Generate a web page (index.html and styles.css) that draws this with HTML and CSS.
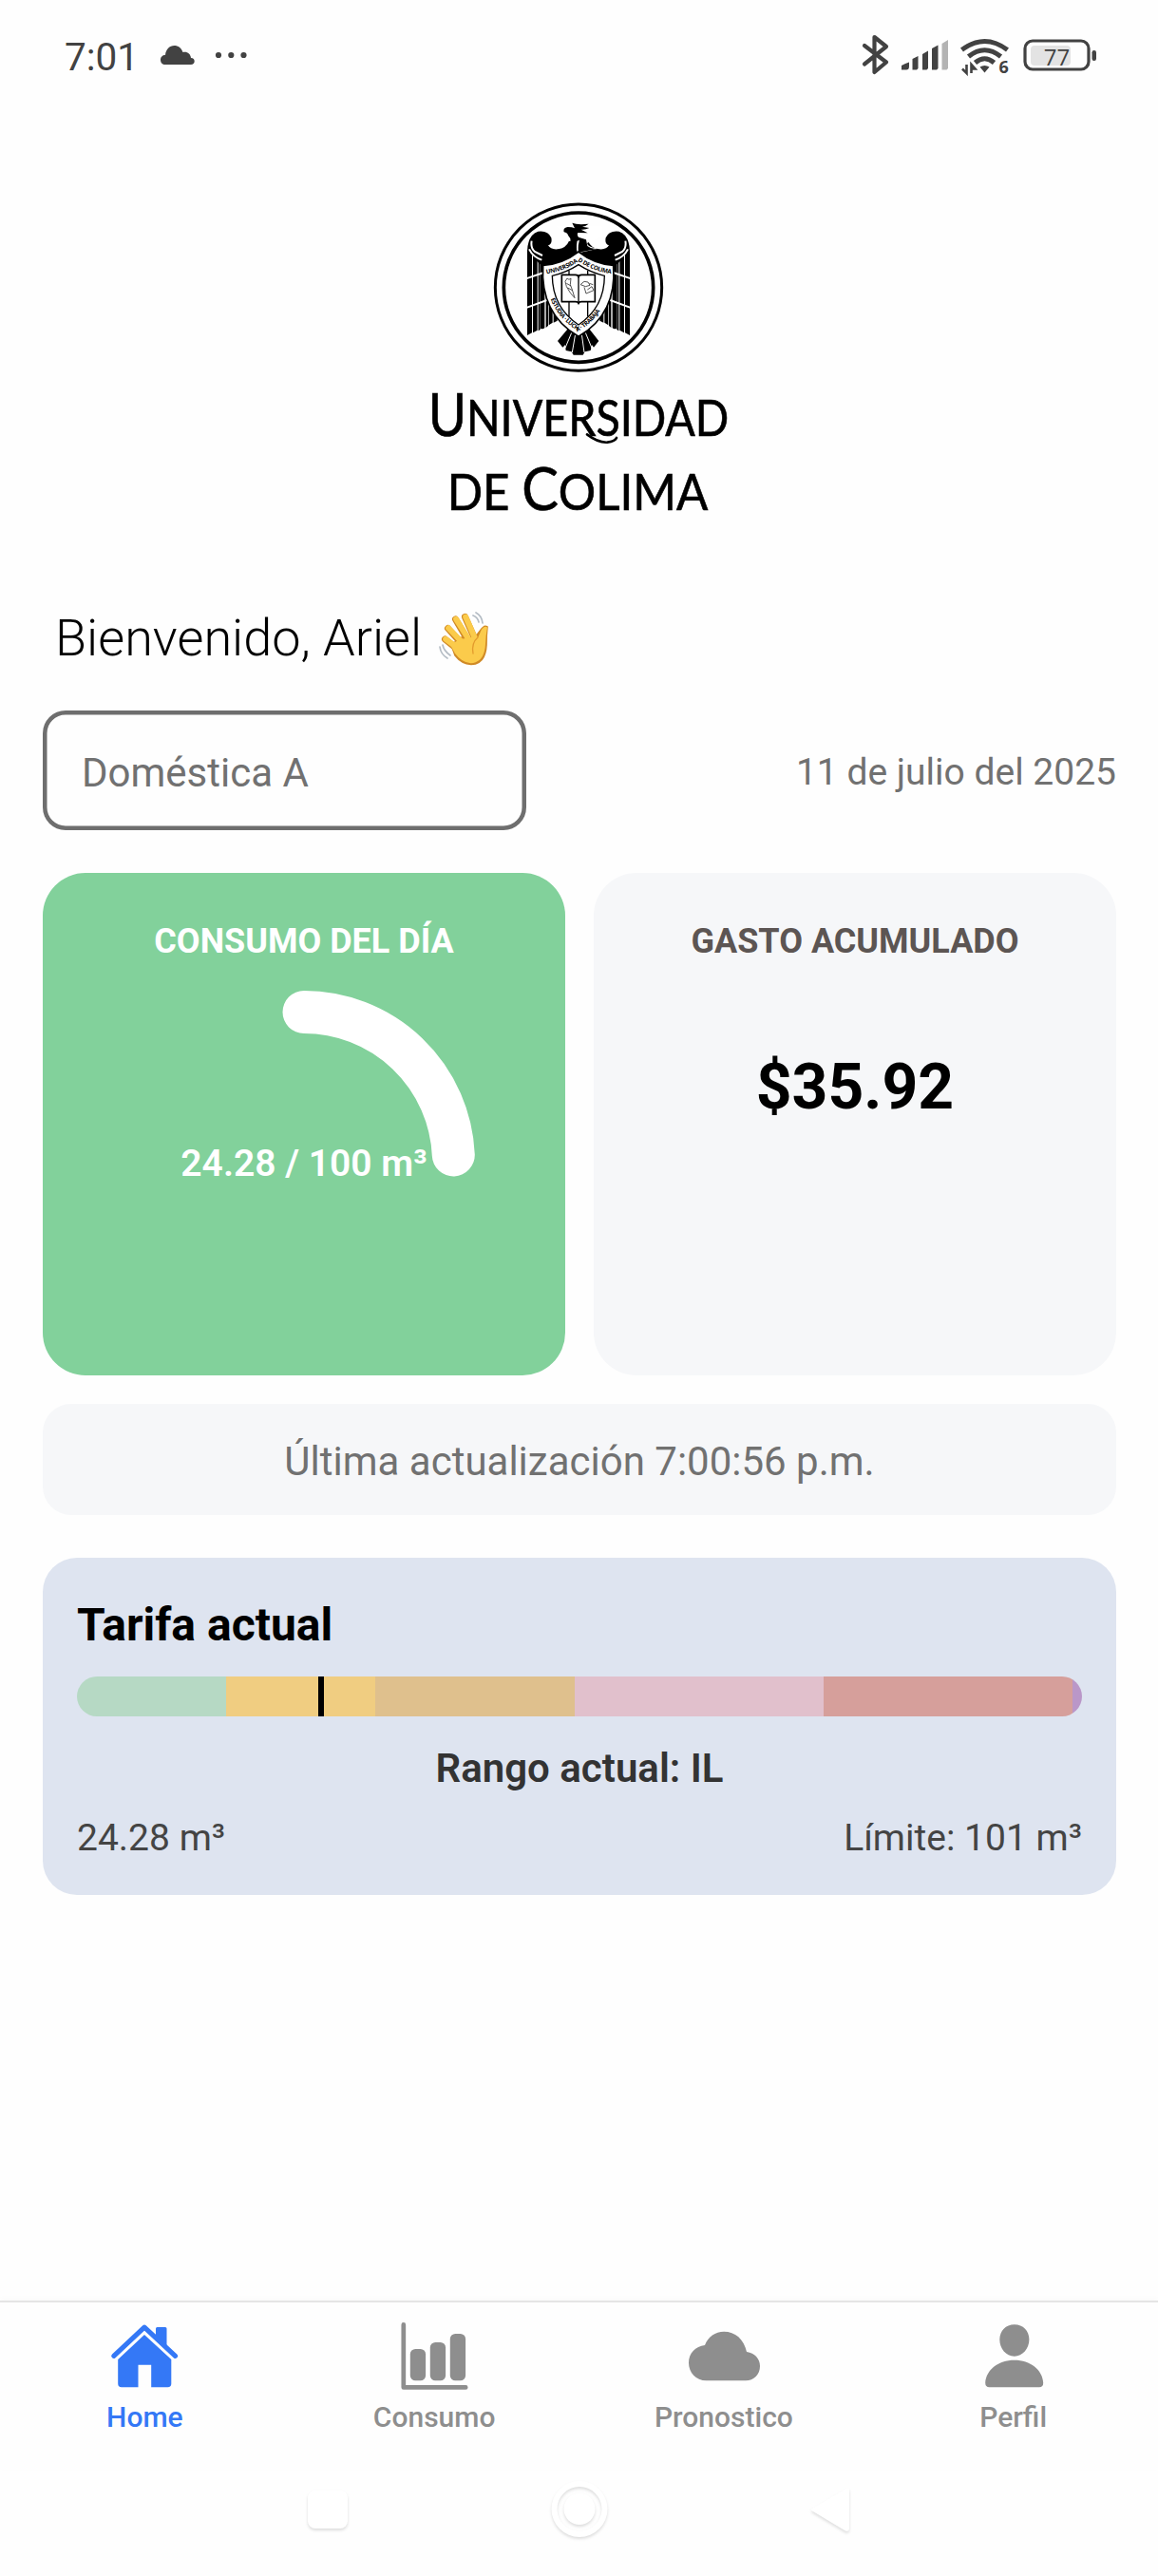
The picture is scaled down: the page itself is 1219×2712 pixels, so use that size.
FILE: index.html
```html
<!DOCTYPE html>
<html lang="es">
<head>
<meta charset="utf-8">
<title>Consumo de agua</title>
<link rel="stylesheet" href="styles.css">
</head>
<body>
<div class="screen">
  <header class="status">
    <div class="status-left">
      <span class="clock">7:01</span>
      <svg class="status-cloud" width="36" height="20" viewBox="0 0 36 20"><path fill="#424242" d="M5 20C2 20 0 18 0 15C0 12 2 10 5 10C5.500 4 9.500 0 14.500 0C18.500 0 22 2.500 23.500 7C28 6 31.500 8.500 32 13C34.500 13 35.700 14.500 35.700 16.500C35.700 18.500 34.200 20 32 20Z"/></svg>
      <svg width="34" height="8" viewBox="0 0 34 8" fill="#424242"><circle cx="4" cy="4" r="3.100"/><circle cx="17.300" cy="4" r="3.100"/><circle cx="30.500" cy="4" r="3.100"/></svg>
    </div>
    <svg class="status-right" width="250" height="48" viewBox="0 0 250 48">
      <path fill="none" stroke="#424242" stroke-width="4.200" stroke-linejoin="round" stroke-linecap="round" d="M5 14L28 31.500L15.500 42V5L28 15L5 33.500"/>
      <g fill="#424242">
        <path d="M44 39.500V35Q48 32.500 52 31.500V36Q52 39.500 49 39.500ZM55.500 39.500V28L61.500 25V38L60 39.500ZM66 39.500V23L72 19.500V38L70.500 39.500ZM76 39.500V17L82.500 13.500V38L81 39.500Z"/>
        <path fill="#b3b3b3" d="M86.500 39.500V12L93 8V38L91.500 39.500Z"/>
      </g>
      <g fill="none" stroke="#424242" stroke-width="5">
        <path d="M107.500 18.500Q131.500 .5 155.500 18.500"/><path d="M114.500 25.500Q131.500 12 148.500 25.500"/><path d="M121.500 32Q131.500 23.500 141.500 32"/>
      </g>
      <path fill="#424242" d="M126.500 36.500Q131.500 33.500 136.500 36.500L131.500 42.500Z"/>
      <path fill="none" stroke="#424242" stroke-width="2.600" d="M112.500 34V43L108 38.500M117.500 43V34L121.500 38.500H117"/>
      <text class="wifi-gen" x="146.500" y="43">6</text>
      <rect x="180" y="14" width="42" height="21" rx="4" fill="#e3e3e3"/>
      <rect x="174" y="9" width="67" height="30" rx="8" fill="none" stroke="#424242" stroke-width="3.200"/>
      <rect x="244.500" y="19" width="4.500" height="11" rx="2.200" fill="#424242"/>
      <text class="battery-level" x="207.500" y="35" text-anchor="middle">77</text>
    </svg>
  </header>

  <main class="content">
    <svg class="logo" width="320" height="330" viewBox="0 0 960 990" role="img" aria-label="Universidad de Colima">
      <defs>
        <g id="wing">
          <path d="M166 195Q168 142 200 132Q232 128 242 152Q246 172 232 176Q240 190 262 188Q296 184 301 150L280 130Q283 118 298 122L328 160V212Q285 240 215 242Q185 220 178 196Z"/>
          <path d="M166 190V460L181 452V195ZM184 200V452L198 444V205ZM201 210V446L207 442V210ZM208 215V438Q216 442 221 436V225ZM225 235V436L232 430V240ZM234 240V428L246 420V240ZM249 240V420L261 414V240Z"/>
          <path fill="none" stroke="#fff" stroke-width="6" d="M160 282L218 262M160 374L236 346M180 162Q176 184 190 196L214 208M172 188Q184 212 212 222"/>
        </g>
        <path id="motto-top" d="M227 266Q285 256 328 227Q372 256 432 266"/>
        <path id="motto-bottom" d="M240 345Q265 410 328 447Q391 410 418 340"/>
      </defs>
      <g transform="translate(149 -40)">
        <g fill="none" stroke="#000">
          <circle cx="328" cy="309" r="263" stroke-width="9"/>
          <circle cx="328" cy="309" r="236" stroke-width="11"/>
        </g>
        <path d="M294 440L262 478L278 498L286 490L288 508L306 512L312 522H342L348 512L366 508L370 490L376 498L392 478L362 440Z"/>
        <path fill="none" stroke="#fff" stroke-width="3" d="M306 452L286 500M318 456L308 514M338 456L346 514M350 452L370 500"/>
        <use href="#wing"/>
        <use href="#wing" transform="translate(656 0) scale(-1 1)"/>
        <path fill="#fff" d="M258 116H402V148L356 168Q352 180 390 186L328 200Q318 196 324 160L292 164Z"/>
        <path d="M300 180Q307 155 296 146Q293 136 282 134Q278 120 294 118Q308 118 316 122L308 105Q324 112 360 108Q350 116 340 117L362 121Q350 127 336 126L357 137L326 136Q322 143 328 150L352 158L356 178Q370 190 390 186L328 198Q325 178 331 160L322 162L320 190Z"/>
        <path fill="#fff" stroke="#000" stroke-width="5" d="M328 196Q278 235 216 239Q206 392 328 464Q450 392 438 239Q378 235 328 196Z"/>
        <path fill="#fff" stroke="#000" stroke-width="4" d="M328 237Q290 262 245 272Q246 372 328 427Q410 372 410 272Q366 262 328 237Z"/>
        <path fill="none" stroke="#000" stroke-width="4" d="M298 256V400M357 256V400"/>
        <path fill="#fff" stroke="#000" stroke-width="5" stroke-linejoin="round" d="M275 269H318Q328 269 328 276Q328 269 338 269H380V354H338Q328 354 328 360Q328 354 318 354H275Z"/>
        <path fill="none" stroke="#000" stroke-width="4" d="M328 274V358"/>
        <path fill="none" stroke="#333" stroke-width="2.500" d="M292 280L298 284L304 280L302 300L308 316L316 342L302 326L290 306L286 290ZM290 296L304 304M294 310L308 318M334 300L346 290L358 292L364 302L350 306L340 302ZM346 308L352 328L376 318L370 306L356 316M362 296L374 300"/>
        <text class="motto"><textPath href="#motto-top" textLength="220">UNIVERSIDAD DE COLIMA</textPath></text>
        <text class="motto"><textPath href="#motto-bottom" textLength="232">ESTUDIA · LUCHA · TRABAJA</textPath></text>
      </g>
      <g class="logo-name">
        <text x="2" y="739" textLength="950" lengthAdjust="spacingAndGlyphs"><tspan class="initial">U</tspan>NIVERSIDAD</text>
        <text x="62" y="972" textLength="824" lengthAdjust="spacingAndGlyphs">DE <tspan class="initial">C</tspan>OLIMA</text>
      </g>
      <path fill="none" stroke="#000" stroke-width="8" stroke-linecap="round" d="M504 733Q540 760 568 758Q592 755 597 744"/>
    </svg>

    <h1 class="greeting">Bienvenido, Ariel
      <svg class="wave" width="53" height="58" viewBox="0 0 53 58">
        <g fill="none" stroke="#b4bcc4" stroke-width="1.700" stroke-linecap="round"><path d="M39 2Q45 5 46 13M36 5Q41 7 42 12M1 38Q2 46 9 50M4 36Q5 42 12 47"/></g>
        <g stroke-linecap="round" stroke-linejoin="round">
          <path fill="#d08a26" stroke="#d08a26" stroke-width="1.600" d="M13 36L24 28L38 28L45 19Q48 15 51 17Q50 25 50 36Q49 56 34 56.500Q24 56 17 47Z"/>
          <path fill="none" stroke="#d08a26" stroke-width="7" d="M6.500 30L24 44M9.500 18.500L27 38M17.500 9L31 32M27.500 6.500L38 30"/>
          <path fill="none" stroke="#fbcb4b" stroke-width="6" d="M7.200 29.800L25 43M10.200 18.300L28 37M18.200 8.900L32 31M28.200 6.500L38 29"/>
          <path fill="#fbcb4b" d="M12 36L22 30L38 27.500L41 28.500L45 19.500Q48 15.500 51 17.500Q49.500 25 49 35Q48 54.500 33.500 55.300Q24 54.500 17 45Z"/>
          <path fill="none" stroke="#e39b2d" stroke-width="1.300" d="M41 28Q34 34 36 45"/>
        </g>
      </svg>
    </h1>

    <div class="selector-row">
      <div class="tariff-select">Doméstica A</div>
      <time class="date">11 de julio del 2025</time>
    </div>

    <div class="cards">
      <section class="card card-usage">
        <h2>CONSUMO DEL DÍA</h2>
        <div class="gauge">
          <svg width="360" height="360" viewBox="0 0 360 360"><path d="M180 22.500A157.500 157.500 0 0 1 337.300 172.900" fill="none" stroke="#fff" stroke-width="45" stroke-linecap="round"/></svg>
          <span>24.28 / 100 m³</span>
        </div>
      </section>
      <section class="card card-cost">
        <h2>GASTO ACUMULADO</h2>
        <p class="amount">$35.92</p>
      </section>
    </div>

    <p class="updated">Última actualización 7:00:56 p.m.</p>

    <section class="tariff">
      <h2>Tarifa actual</h2>
      <div class="bar">
        <span class="seg seg-1" style="flex-grow:15"></span>
        <span class="seg seg-2" style="flex-grow:15"></span>
        <span class="seg seg-3" style="flex-grow:20"></span>
        <span class="seg seg-4" style="flex-grow:25"></span>
        <span class="seg seg-5" style="flex-grow:25"></span>
        <span class="seg seg-6" style="flex-grow:1"></span>
        <span class="marker" style="left:24.04%"></span>
      </div>
      <p class="range">Rango actual: IL</p>
      <div class="limits"><span>24.28 m³</span><span>Límite: 101 m³</span></div>
    </section>
  </main>

  <nav class="tabs">
    <a class="tab tab-active">
      <svg width="76" height="76" viewBox="0 0 76 76"><path fill="none" stroke="currentColor" stroke-width="5.200" stroke-linecap="round" stroke-linejoin="round" d="M5.800 37.300L38 7.200L70.500 37.300"/><path fill="currentColor" d="M50 16V8.500Q50 7 51.500 7H60Q61.500 7 61.500 8.500V28ZM38 15L66.300 41V66.500Q66.300 70.300 62.500 70.300H45.200V46.700H31.500V70.300H14Q10.200 70.300 10.200 66.500V41Z"/></svg>
      <span>Home</span>
    </a>
    <a class="tab">
      <svg width="76" height="76" viewBox="0 0 76 76"><path fill="none" stroke="currentColor" stroke-width="4.700" stroke-linecap="round" stroke-linejoin="round" d="M5.800 4.400V70.400H71.200"/><g fill="currentColor"><rect x="12.800" y="30" width="16.300" height="33.300" rx="5.500"/><rect x="33.800" y="23" width="16.300" height="40.300" rx="5.500"/><rect x="54.800" y="14" width="16.300" height="49.300" rx="5.500"/></g></svg>
      <span>Consumo</span>
    </a>
    <a class="tab">
      <svg width="76" height="76" viewBox="0 0 76 76"><path fill="currentColor" d="M19.500 63.300C8.500 63.300 1 55 1 44.500C1 34.500 8 27 18 26C21.500 17 29 11.700 38 11.700C50 11.700 59 19.500 62 33C70.500 34.500 76 40 76 48C76 57 69.500 63.300 61 63.300Z"/></svg>
      <span>Pronostico</span>
    </a>
    <a class="tab">
      <svg width="76" height="76" viewBox="0 0 76 76"><path fill="currentColor" d="M38.800 4.300C48 4.300 54.400 11 54.400 20C54.400 29.500 47.500 37.700 38.800 37.700C30 37.700 23.300 29.500 23.300 20C23.300 11 29.800 4.300 38.800 4.300ZM12.500 70.300Q8.200 70.300 8.200 65.500C9 52 22 41.700 38.800 41.700C55.500 41.700 68.500 52 69.200 65.500Q69.200 70.300 65 70.300Z"/></svg>
      <span>Perfil</span>
    </a>
  </nav>

  <div class="system-nav">
    <svg width="600" height="72" viewBox="0 0 600 72" fill="#fff">
      <g class="raised">
        <rect x="14" y="16" width="42" height="40" rx="8"/>
        <path fill-rule="evenodd" d="M300 6A29.500 29.500 0 1 1 300 65A29.500 29.500 0 1 1 300 6ZM300 12A23.500 23.500 0 1 0 300 59A23.500 23.500 0 1 0 300 12Z"/>
        <circle cx="300" cy="35.500" r="16.500"/>
        <path d="M584 15V55Q584 60 580 58.500L545 37.500Q543 36 545 35L581 14Q584 13 584 15Z"/>
      </g>
    </svg>
  </div>
</div>
</body>
</html>
```
FILE: styles.css
```css
* {
  box-sizing: border-box;
}

body,
h1,
h2,
p {
  margin: 0;
}

body {
  background: #fefefe;
  font-family: Roboto, sans-serif;
  color: #000;
}

svg {
  display: block;
}

.screen {
  display: flex;
  flex-direction: column;
  width: 1219px;
  height: 2712px;
}

.status {
  display: flex;
  justify-content: space-between;
  height: 113px;
  padding: 34px 64px 0 68px;
}

.status-left {
  display: flex;
  align-items: center;
  height: 48px;
}

.clock {
  font-size: 40.500px;
  font-weight: 450;
  line-height: 48px;
  color: #424242;
  margin-top: 4px;
}

.status-cloud {
  margin: 0 21px 0 23px;
}

.wifi-gen {
  font: bold 18px "Open Sans", sans-serif;
  fill: #424242;
}

.battery-level {
  font: 24px "Open Sans", sans-serif;
  fill: #424242;
}

.content {
  display: flex;
  flex-direction: column;
  flex: 1;
  padding: 100px 44px 0 45px;
}

.logo {
  align-self: center;
  overflow: visible;
  margin-bottom: 97px;
}

.motto {
  font: bold 19px "Open Sans", sans-serif;
}

.logo-name {
  font: 400 159px Lato, sans-serif;
  stroke: #000;
  stroke-width: 2px;
}

.logo-name .initial {
  font-size: 187px;
}

.greeting {
  display: flex;
  align-items: center;
  gap: 18px;
  height: 64px;
  padding-left: 13px;
  font-size: 54px;
  font-weight: 300;
  line-height: 64px;
}

.selector-row {
  display: flex;
  justify-content: space-between;
  align-items: center;
  margin: 44px 0 45px;
  color: #717171;
}

.tariff-select {
  width: 509px;
  height: 126px;
  padding: 5px 41px 0;
  border-radius: 24px;
  box-shadow: inset 0 0 0 4.500px #6e6e6e;
  font-size: 42px;
  line-height: 121px;
}

.date {
  padding-top: 3px;
  font-size: 39px;
}

.cards {
  display: grid;
  grid-template-columns: 1fr 1fr;
  gap: 30px;
  height: 529px;
}

.card {
  display: flex;
  flex-direction: column;
  align-items: center;
  padding-top: 51px;
  border-radius: 45px;
}

.card h2 {
  font-size: 36px;
  font-weight: 700;
  line-height: 42px;
}

.card-usage {
  background: #82d19b;
  color: #fff;
}

.card-cost {
  background: #f6f7f9;
}

.card-cost h2 {
  color: #5c5553;
}

.gauge {
  display: grid;
  place-items: center;
  margin-top: 31px;
}

.gauge > * {
  grid-area: 1 / 1;
}

.gauge span {
  padding-top: 3px;
  font-size: 39px;
  font-weight: 600;
}

.amount {
  margin-top: 94px;
  font-size: 66px;
  font-weight: 700;
  line-height: 77px;
}

.updated {
  height: 117px;
  margin: 30px 0 45px;
  padding-top: 4px;
  border-radius: 30px;
  background: #f6f7f9;
  color: #717171;
  font-size: 42px;
  line-height: 113px;
  text-align: center;
}

.tariff {
  height: 355px;
  padding: 43px 36px 0;
  border-radius: 36px;
  background: #dee4f0;
}

.tariff h2 {
  font-size: 48px;
  line-height: 56px;
}

.bar {
  display: flex;
  position: relative;
  height: 42px;
  margin: 26px 0 30px;
  border-radius: 21px;
  overflow: hidden;
}

.seg {
  flex-basis: 0;
}

.seg-1 { background: #b6d9c4; }
.seg-2 { background: #f0cd81; }
.seg-3 { background: #dfc08d; }
.seg-4 { background: #e1c0cc; }
.seg-5 { background: #d69f9b; }
.seg-6 { background: #ba97c8; }

.marker {
  position: absolute;
  top: 0;
  bottom: 0;
  width: 6px;
  background: #000;
}

.range {
  color: #333;
  font-size: 42px;
  font-weight: 600;
  line-height: 50px;
  text-align: center;
}

.limits {
  display: flex;
  justify-content: space-between;
  margin-top: 25px;
  color: #444;
  font-size: 39px;
  line-height: 46px;
}

.tabs {
  display: grid;
  grid-template-columns: repeat(4, 1fr);
  height: 178px;
  padding-top: 19px;
  border-top: 2px solid #e5e5e5;
  box-shadow: 0 -2px 6px rgba(0, 0, 0, 0.025);
}

.tab {
  display: flex;
  flex-direction: column;
  align-items: center;
  gap: 8px;
  color: #8e8e8e;
  font-size: 30px;
  font-weight: 500;
  line-height: 36px;
}

.tab-active {
  color: #3478f6;
}

.system-nav {
  display: flex;
  justify-content: center;
  height: 112px;
  padding-top: 6px;
}

.raised {
  filter: drop-shadow(0 2px 1.500px rgba(0, 0, 0, 0.13));
}
```
